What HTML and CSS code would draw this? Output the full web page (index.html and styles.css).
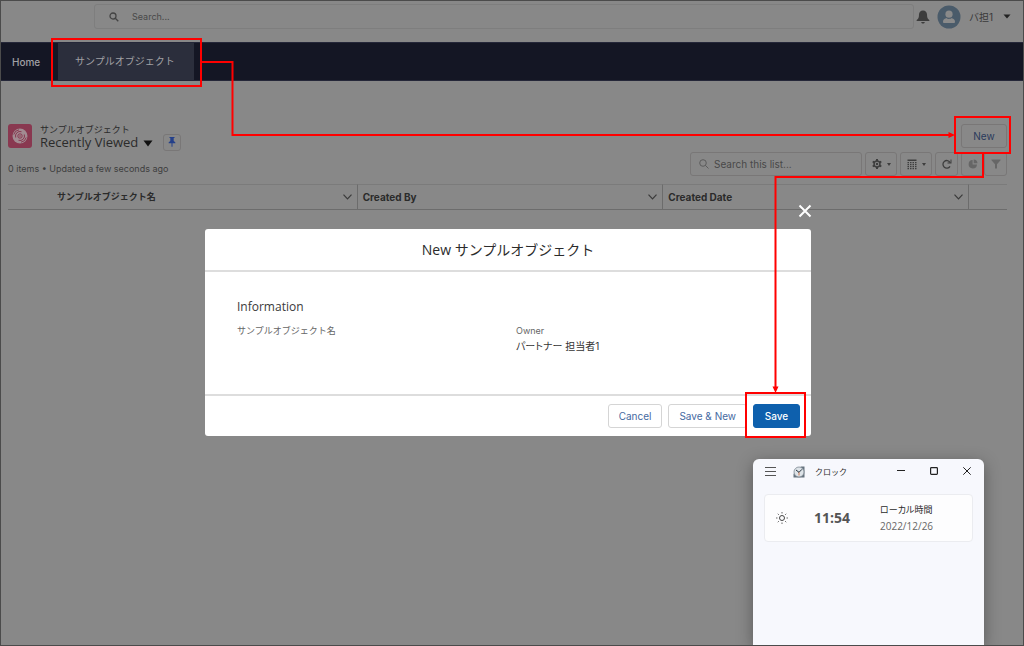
FILE: index.html
```html
<!DOCTYPE html>
<html lang="ja">
<head>
<meta charset="utf-8">
<title>サンプルオブジェクト</title>
<link rel="stylesheet" href="styles.css">
</head>
<body>
<div class="page">
  <header class="topbar">
    <label class="global-search">
      <svg class="icon-search" width="10" height="10" viewBox="0 0 10 10"><circle cx="4" cy="4" r="3"/><path d="M6.300 6.300L9.300 9.300"/></svg>
      <input type="text" placeholder="Search..." aria-label="Search">
    </label>
    <button class="plain" aria-label="Notifications">
      <svg width="14" height="14" viewBox="0 0 14 14"><path fill="#3c3c3c" d="M7 0.500C4.500 0.500 3 2.200 3 4.500C3 7.500 2.300 8.800 1 9.700C0.300 10.200 0.500 11 1.200 11H12.800C13.500 11 13.700 10.200 13 9.700C11.700 8.800 11 7.500 11 4.500C11 2.200 9.500 0.500 7 0.500ZM5.200 12H8.800C8.500 14 5.500 14 5.200 12Z"/></svg>
    </button>
    <svg class="avatar" width="24" height="24" viewBox="0 0 24 24"><circle cx="12" cy="12" r="11.500" fill="#4a5b6a"/><circle cx="12" cy="9.200" r="3.600" fill="#8a8a8a"/><path fill="#8a8a8a" d="M6 16.500C6 14.300 8.500 13.500 9.300 13C10.500 14.200 13.500 14.200 14.700 13C15.500 13.500 18 14.300 18 16.500C18 17.500 17.600 18 16.800 18H7.200C6.400 18 6 17.500 6 16.500Z"/></svg>
    <button class="plain user">バ担1 <svg width="8" height="5" viewBox="0 0 8 5"><path d="M0.500 0.500H7.500L4 4.500Z" fill="#222"/></svg></button>
  </header>

  <nav class="nav">
    <a href="#">Home</a>
    <a href="#" class="active" aria-current="page">サンプルオブジェクト</a>
  </nav>

  <main class="list">
    <div class="list-head">
      <svg width="24" height="24" viewBox="0 0 24 24"><rect width="24" height="24" rx="3" fill="#893850"/><circle cx="12" cy="12" r="7.500" fill="#a28b92"/><g fill="none" stroke="#893850" stroke-width="1"><circle cx="12" cy="12" r="2.200"/><path d="M7.700 13.500A4.600 4.600 0 0 1 13.500 7.700M16.300 10.500A4.600 4.600 0 0 1 10.500 16.300"/><path d="M5.800 10.500A6.300 6.300 0 0 1 11 5.800M18.200 13.500A6.300 6.300 0 0 1 13 18.200"/></g><circle cx="12" cy="12" r="0.800" fill="#893850"/></svg>
      <div class="titles">
        <span class="object">サンプルオブジェクト</span>
        <h1>Recently Viewed</h1>
      </div>
      <button class="plain views" aria-label="Select a list view"><svg width="10" height="7" viewBox="0 0 10 7"><path d="M0.500 0.500H9.500L5 6.500Z" fill="#111"/></svg></button>
      <button class="box pin" aria-label="Pin this list view"><svg width="8" height="10" viewBox="0 0 8 10"><path fill="#24408a" d="M1.500 0H6.500V1H5.700V4L7.300 5.300V6.300H4.500V9.700H3.500V6.300H0.700V5.300L2.300 4V1H1.500Z"/></svg></button>
      <button class="box new">New</button>
    </div>
    <div class="tools">
      <span class="status">0 items • Updated a few seconds ago</span>
      <label class="box list-search">
        <svg class="icon-search light" width="10" height="10" viewBox="0 0 10 10"><circle cx="4" cy="4" r="3.300"/><path d="M6.300 6.300L9.500 9.500"/></svg>
        <input type="text" placeholder="Search this list..." aria-label="Search this list">
      </label>
      <button class="box wide" aria-label="List view controls">
        <svg width="10" height="10" viewBox="0 0 10 10"><g stroke="#3e3e3e" stroke-width="2"><path d="M5 0V10M0.700 2.500L9.300 7.500M9.300 2.500L0.700 7.500"/></g><circle cx="5" cy="5" r="3.700" fill="#3e3e3e"/><circle cx="5" cy="5" r="2.200" fill="#888"/><circle cx="5" cy="5" r="1.200" fill="#3e3e3e"/></svg>
        <svg width="4" height="3" viewBox="0 0 4 3"><path d="M0 0H4L2 3Z" fill="#3e3e3e"/></svg>
      </button>
      <button class="box wide" aria-label="Display as">
        <svg width="10" height="11" viewBox="0 0 10 11"><path fill="#3e3e3e" d="M0.500 0.500H9.500V2H0.500ZM0.500 3H2V4.300H0.500ZM3 3H4.500V4.300H3ZM5.500 3H7V4.300H5.500ZM8 3H9.500V4.300H8ZM0.500 5H2V6.300H0.500ZM3 5H4.500V6.300H3ZM5.500 5H7V6.300H5.500ZM8 5H9.500V6.300H8ZM0.500 7H2V8.300H0.500ZM3 7H4.500V8.300H3ZM5.500 7H7V8.300H5.500ZM8 7H9.500V8.300H8ZM0.500 9H2V10.300H0.500ZM3 9H4.500V10.300H3ZM5.500 9H7V10.300H5.500ZM8 9H9.500V10.300H8Z"/></svg>
        <svg width="4" height="3" viewBox="0 0 4 3"><path d="M0 0H4L2 3Z" fill="#3e3e3e"/></svg>
      </button>
      <button class="box square" aria-label="Refresh"><svg width="10" height="10" viewBox="0 0 10 10"><path d="M8 7.300A3.800 3.800 0 1 1 8 3.300" fill="none" stroke="#3e3e3e" stroke-width="1.300"/><path d="M9.500 0.500V4.500H5.500V3.500L8.500 3.200V0.500Z" fill="#3e3e3e"/></svg></button>
      <div class="pair">
        <button class="box square" aria-label="Show charts"><svg width="10" height="10" viewBox="0 0 10 10"><path fill="#666" d="M4.600 1V5.400H9A4.200 4.200 0 1 1 4.600 1ZM5.700 0.500A4 4 0 0 1 9.500 4.300H5.700Z"/></svg></button>
        <button class="box square" aria-label="Show filters"><svg width="10" height="10" viewBox="0 0 10 10"><path fill="#666" d="M0.500 0.500H9.500V1.300L6 5.300V9.500H4V5.300L0.500 1.300Z"/></svg></button>
      </div>
    </div>

    <table class="grid">
      <thead>
        <tr>
          <th class="name"><span>サンプルオブジェクト名<svg width="9" height="6" viewBox="0 0 9 6"><path d="M0.500 0.700L4.500 4.900L8.500 0.700"/></svg></span></th>
          <th><span>Created By<svg width="9" height="6" viewBox="0 0 9 6"><path d="M0.500 0.700L4.500 4.900L8.500 0.700"/></svg></span></th>
          <th><span>Created Date<svg width="9" height="6" viewBox="0 0 9 6"><path d="M0.500 0.700L4.500 4.900L8.500 0.700"/></svg></span></th>
          <th class="actions"></th>
        </tr>
      </thead>
    </table>
  </main>

  <div class="overlay">
    <section class="modal" role="dialog" aria-labelledby="modal-title">
      <button class="plain close" aria-label="Close"><svg width="14" height="14" viewBox="0 0 14 14"><path d="M1.500 1.500L12.500 12.500M12.500 1.500L1.500 12.500" stroke="#fff" stroke-width="2"/></svg></button>
      <h2 id="modal-title">New サンプルオブジェクト</h2>
      <div class="modal-body">
        <h3>Information</h3>
        <div class="fields">
          <div>サンプルオブジェクト名</div>
          <div><div class="label">Owner</div><div class="value">パートナー 担当者1</div></div>
        </div>
      </div>
      <footer>
        <button class="action">Cancel</button>
        <button class="action">Save &amp; New</button>
        <button class="action primary">Save</button>
      </footer>
    </section>
  </div>

  <section class="clock" aria-label="クロック">
    <div class="clock-bar">
      <button class="plain" aria-label="Menu"><svg width="11" height="9" viewBox="0 0 11 9"><path d="M0 0.500H11M0 4.500H11M0 8.500H11" stroke="#555"/></svg></button>
      <svg class="clock-logo" width="12" height="12" viewBox="0 0 12 12"><path d="M8 0.500H11.500V11.500H0.500V8Z" fill="#66737f"/><circle cx="6" cy="6" r="5" fill="#dde3e8" stroke="#7d8993" stroke-width="0.800"/><path d="M6 9.500V6" stroke="#d07850"/><path d="M3 4L6 6.300L9 3.300" fill="none" stroke="#273440"/></svg>
      <span class="clock-name">クロック</span>
      <div class="win-buttons">
        <button class="plain" aria-label="Minimize"><svg width="8" height="8" viewBox="0 0 8 8"><path d="M0 3.500H8" stroke="#222"/></svg></button>
        <button class="plain" aria-label="Maximize"><svg width="8" height="8" viewBox="0 0 8 8"><rect x="0.600" y="0.600" width="6.800" height="6.800" rx="0.800" fill="none" stroke="#222" stroke-width="1.200"/></svg></button>
        <button class="plain" aria-label="Close"><svg width="8" height="8" viewBox="0 0 8 8"><path d="M0.300 0.300L7.700 7.700M7.700 0.300L0.300 7.700" stroke="#222"/></svg></button>
      </div>
    </div>
    <div class="clock-card">
      <svg width="12" height="12" viewBox="0 0 12 12"><circle cx="6" cy="6" r="2.500" fill="none" stroke="#444"/><path d="M6 0.200V1.400M6 10.600V11.800M0.200 6H1.400M10.600 6H11.800M1.800 1.800L2.700 2.700M9.300 9.300L10.200 10.200M10.200 1.800L9.300 2.700M2.700 9.300L1.800 10.200" stroke="#444"/></svg>
      <time class="time">11:54</time>
      <div class="zone"><span>ローカル時間</span><time>2022/12/26</time></div>
    </div>
  </section>

  <svg class="callouts" width="1024" height="646" viewBox="0 0 1024 646" aria-hidden="true">
    <g fill="none" stroke="#f00" stroke-width="2">
      <rect x="52" y="39" width="149" height="47"/>
      <path d="M201 62H232.500V135H950"/>
      <rect x="955" y="117" width="55" height="36"/>
      <path d="M983 153V177H775.500V388"/>
      <rect x="746" y="393" width="59" height="44"/>
    </g>
    <path fill="#f00" d="M948.500 132L955 135L948.500 138ZM772.500 386.500H778.500L775.500 393Z"/>
  </svg>
</div>
</body>
</html>
```
FILE: styles.css
```css
* {
  box-sizing: border-box;
}

body {
  margin: 0;
  font: 10px/16px Inter, "Noto Sans CJK JP", sans-serif;
  color: #2b2b2b;
}

button,
input {
  font: inherit;
  color: inherit;
}

svg {
  display: block;
  flex: none;
}

.page {
  position: relative;
  min-height: 100vh;
  overflow: hidden;
  border: 1px solid #4b4b4b;
  background: #888;
}

.plain {
  display: flex;
  align-items: center;
  padding: 0;
  border: 0;
  background: none;
}

.box {
  display: flex;
  align-items: center;
  justify-content: center;
  height: 24px;
  padding: 0;
  border: 1px solid #797777;
  border-radius: 3px;
  background: #888;
}

.topbar {
  display: flex;
  align-items: center;
  height: 41px;
  padding: 0 12px 10px 93px;
}

.global-search {
  display: flex;
  flex: 1;
  align-items: center;
  gap: 13px;
  height: 25px;
  margin-right: 2px;
  padding-left: 14px;
  border: 1px solid #7e7e7e;
  border-radius: 3px;
}

input {
  flex: 1;
  min-width: 0;
  padding: 0;
  border: 0;
  outline: 0;
  background: none;
}

.global-search input {
  font-size: 9px;
}

input::placeholder {
  color: #484848;
  opacity: 1;
}

.icon-search {
  fill: none;
  stroke: #444;
  stroke-width: 1.3;
}

.icon-search.light {
  stroke: #5c5c5c;
  stroke-width: 1;
}

.avatar {
  margin: 0 8px 0 7px;
}

.user {
  gap: 10px;
  color: #3a3a3a;
}

.nav {
  display: flex;
  height: 39px;
  border: solid #252739;
  border-width: 1px 0;
  background: #141624;
}

.nav a {
  padding: 11px 0 0 11px;
  width: 57px;
  color: #a0a0a4;
  font-weight: 500;
  text-decoration: none;
}

.nav .active {
  width: 136px;
  padding: 10px 0 0 17px;
  background: #2b2e3c;
  font-weight: 400;
}

.list {
  padding: 43px 16px 0 7px;
}

.list-head {
  display: flex;
  align-items: center;
  height: 24px;
}

.titles {
  margin-left: 8px;
  line-height: 13px;
  white-space: nowrap;
}

.object {
  display: block;
  height: 12px;
  font-size: 9px;
}

h1 {
  margin: 0;
  font: 13px/15px "Open Sans", sans-serif;
}

.views {
  margin: 14px 10px 0 5px;
}

.pin {
  width: 18px;
  height: 17px;
  margin-top: 12px;
}

.new {
  width: 46px;
  margin-left: auto;
  color: #2a3a5c;
}

.tools {
  display: flex;
  gap: 3px;
  height: 25px;
  margin-top: 4px;
}

.status {
  flex: 1;
  padding-top: 9px;
  font-size: 9px;
  color: #3e3e3e;
}

.list-search {
  gap: 5px;
  width: 172px;
  padding-left: 8px;
}

.wide {
  gap: 5px;
  width: 32px;
}

.square {
  width: 23px;
}

.pair {
  display: flex;
}

.grid {
  width: 100%;
  margin-top: 7px;
  border-collapse: separate;
  border-spacing: 0;
  table-layout: fixed;
}

th {
  height: 26px;
  padding: 0 5px;
  border: solid #6c6c6c;
  border-width: 1px 1px 1px 0;
  border-top-color: #7b7b7b;
  font-size: 10px;
  text-align: left;
}

th span {
  display: flex;
  align-items: center;
  justify-content: space-between;
}

th path {
  fill: none;
  stroke: #3a3a3a;
  stroke-width: 1.2;
}

.name {
  width: 35%;
  padding-left: 49px;
  font-size: 9px;
}

.actions {
  width: 38px;
  border-right: 0;
}

.overlay {
  position: absolute;
  inset: 228px 8px auto 0;
  display: flex;
  justify-content: center;
}

.modal {
  position: relative;
  width: 90%;
  max-width: 606px;
  border-radius: 3px;
  background: #fff;
}

.close {
  position: absolute;
  top: -25px;
  right: -1px;
}

h2 {
  margin: 0;
  padding: 10px 0;
  border-bottom: 2px solid #ddd;
  font: 14px/21px "Open Sans", "Noto Sans CJK JP", sans-serif;
  text-align: center;
}

.modal-body {
  min-height: 122px;
  padding: 25px 32px;
}

h3 {
  margin: 0;
  font: 12px/20px "Open Sans", sans-serif;
  color: #3a3a3a;
}

.fields {
  display: grid;
  grid-template-columns: 1fr 1fr;
  gap: 16px;
  margin-top: 6px;
  font-size: 9px;
  color: #666;
}

.value {
  font-size: 10px;
  font-feature-settings: "palt";
  line-height: 14px;
  color: #333;
}

footer {
  display: flex;
  justify-content: flex-end;
  gap: 6px;
  padding: 8px 11px;
  border-top: 2px solid #ddd;
}

.action {
  height: 24px;
  padding: 0 10px;
  border: 1px solid #d5d5d5;
  border-radius: 3px;
  background: #fff;
  color: #45699f;
}

.primary {
  min-width: 47px;
  border-color: #0e60ad;
  background: #0e60ad;
  color: #fff;
  font-weight: 500;
}

.clock {
  position: absolute;
  top: 458px;
  right: 39px;
  bottom: 0;
  width: 231px;
  padding: 0 11px;
  border-radius: 6px 6px 0 0;
  background: #f7f8fd;
  box-shadow: 0 4px 16px rgba(0, 0, 0, 0.35);
  font-family: "Open Sans", "Noto Sans CJK JP", sans-serif;
}

.clock-bar {
  display: flex;
  align-items: center;
  height: 25px;
}

.clock-bar > .plain {
  margin-left: 1px;
}

.clock-logo {
  margin: 0 10px 0 17px;
}

.clock-name {
  font-size: 8px;
}

.win-buttons {
  display: flex;
  gap: 25px;
  margin: 0 2px 2px auto;
}

.clock-card {
  display: flex;
  align-items: center;
  height: 48px;
  margin-top: 10px;
  padding-left: 11px;
  border: 1px solid #ebecf0;
  border-radius: 4px;
  background: #fdfdfe;
}

.time {
  width: 66px;
  margin-left: 26px;
  font-size: 14px;
  font-weight: 700;
  color: #555;
}

.zone {
  display: flex;
  flex-direction: column;
  font-size: 9px;
  font-feature-settings: "palt";
}

.zone time {
  font-size: 10px;
  color: #666;
}

.callouts {
  position: absolute;
  top: -1px;
  left: -1px;
  pointer-events: none;
}
```
